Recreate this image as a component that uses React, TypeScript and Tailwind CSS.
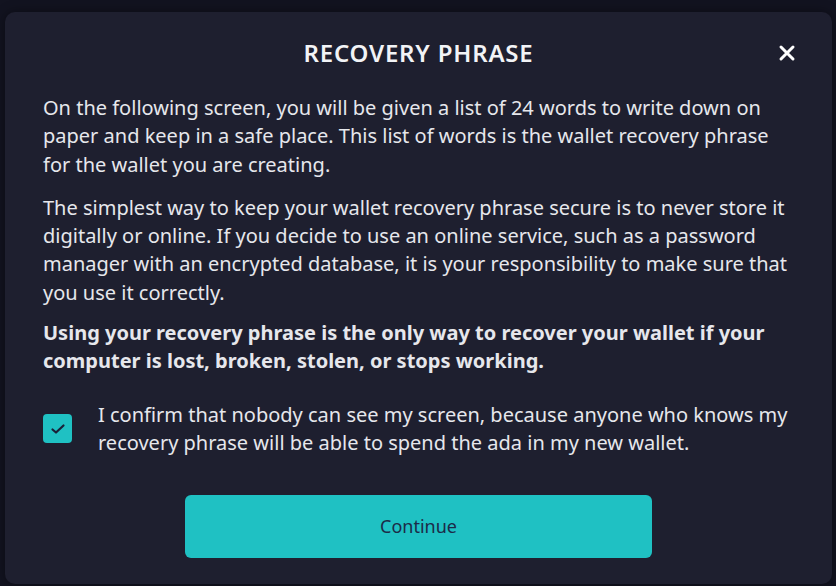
import React, { useState } from "react";

export default function App() {
  const [checked, setChecked] = useState(true);

  return (
    <div
      className="w-[836px] h-[586px] overflow-hidden bg-[#121320] pt-[12px] pl-[5px]"
      style={{ fontFamily: '"Noto Sans", "Open Sans", sans-serif' }}
    >
      <div className="relative w-[827px] h-[572px] rounded-[10px] bg-[#1e1f2f] px-[38px] pt-[25px] text-[#e6e7ec] shadow-[0_0_12px_rgba(0,0,0,0.4)]">
        {/* Header */}
        <h1 className="text-center text-[24px] leading-[32px] font-semibold tracking-[0.8px] text-[#f2f3f6]">
          RECOVERY PHRASE
        </h1>
        <button className="absolute right-[36px] top-[32px] text-white" aria-label="Close">
          <svg width="18" height="18" viewBox="0 0 18 18">
            <path d="M3 3 L15 15 M15 3 L3 15" stroke="currentColor" strokeWidth="3" strokeLinecap="round" />
          </svg>
        </button>

        {/* Body */}
        <div className="mt-[25px] flex flex-col text-[20px] leading-[28.3px]">
          <p>
            On the following screen, you will be given a list of 24 words to write down on paper and
            keep in a safe place. This list of words is the wallet recovery phrase for the wallet you
            are creating.
          </p>
          <p className="mt-[15px]">
            The simplest way to keep your wallet recovery phrase secure is to never store it digitally
            or online. If you decide to use an online service, such as a password manager with an
            encrypted database, it is your responsibility to make sure that you use it correctly.
          </p>
          <p className="mt-[12px] font-bold">
            Using your recovery phrase is the only way to recover your wallet if your computer is lost,
            broken, stolen, or stops working.
          </p>
        </div>

        {/* Confirmation */}
        <label className="mt-[25px] flex items-center gap-[26px] cursor-pointer">
          <button
            onClick={() => setChecked((c) => !c)}
            className="w-[29px] h-[29px] shrink-0 rounded-[4px] bg-[#1fc1c3] grid place-items-center"
            aria-pressed={checked}
          >
            {checked && (
              <svg width="16" height="12" viewBox="0 0 16 12">
                <path d="M2.5 6.5 L6 9.5 L13.5 2.5" fill="none" stroke="#1a2138" strokeWidth="2.2" strokeLinecap="round" strokeLinejoin="round" />
              </svg>
            )}
          </button>
          <span className="text-[20px] leading-[28.3px]">
            I confirm that nobody can see my screen, because anyone who knows my recovery phrase will
            be able to spend the ada in my new wallet.
          </span>
        </label>

        {/* Action */}
        <div className="mt-[38px] flex justify-center">
          <button className="w-[467px] h-[63px] rounded-[6px] bg-[#1fc1c3] text-[18px] text-[#1c2b48]">
            Continue
          </button>
        </div>
      </div>
    </div>
  );
}
